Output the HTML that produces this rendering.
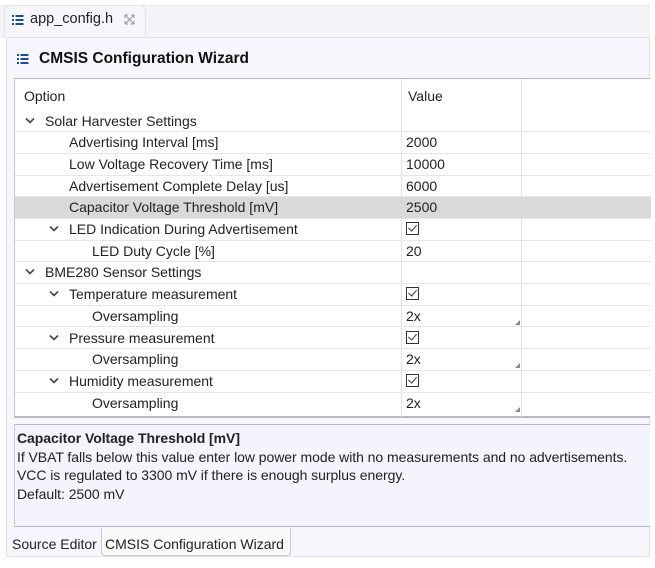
<!DOCTYPE html>
<html><head><style>
*{margin:0;padding:0;box-sizing:border-box}
body{width:655px;height:568px;background:#fff;font-family:"Liberation Sans",sans-serif;font-size:14px;color:#222;position:relative;overflow:hidden}
.abs{position:absolute}
.tabbar{left:0;top:5px;width:650px;height:33px;background:#f3f3f8;border-top:1px solid #e4e4ea}
.tab{left:4px;top:5px;width:142px;height:33px;background:#f6f6fa;border-radius:6px 6px 0 0;border:1px solid #e2e2ea;border-bottom:none}
.editor{left:6px;top:37px;width:644px;height:520px;background:#f6f6fc;border:1px solid #e0e0e8}
.table{left:14px;top:78px;width:636px;height:340px;background:#fff;border-top:1px solid #b8b8c0;border-left:1px solid #c8c8d0;border-bottom:2px solid #b8b8c0}
.row{position:absolute;left:0;width:636px;height:21.7px;border-bottom:1px solid #e6e6e6}
.row span{position:absolute;top:2px;white-space:nowrap}
.sel{background:#d9d9d9}
.vl{position:absolute;top:0;width:1px;height:338px;background:#e2e2e2}
.chev{position:absolute;top:6px}
.cb{position:absolute;left:391px;top:3px;width:13px;height:13px;border:1.5px solid #333}
.cb:after{content:"";position:absolute;left:3px;top:0px;width:4px;height:7px;border-right:1.3px solid #333;border-bottom:1.3px solid #333;transform:rotate(40deg)}
.grip{position:absolute;left:500px;top:14px;width:0;height:0;border-left:5px solid transparent;border-bottom:5px solid #888}
.desc{left:14px;top:424px;width:636px;height:103px;background:#f3f4fc;border-top:1px solid #b8b8c0;border-bottom:1px solid #b8b8c0;border-left:1px solid #c8c8d0;padding:4px 2px;line-height:18.5px;font-size:14px;letter-spacing:-0.05px;white-space:nowrap}
</style></head><body>
<div class="abs tabbar"></div>
<div class="abs tab"></div>
<svg class="abs" style="left:12px;top:15px" width="12" height="10"><g fill="#1a4d99"><rect x="0" y="0" width="2" height="2"/><rect x="0" y="4" width="2" height="2"/><rect x="0" y="8" width="2" height="2"/><rect x="3.5" y="0" width="8" height="2"/><rect x="3.5" y="4" width="8" height="2"/><rect x="3.5" y="8" width="8" height="2"/></g></svg>
<div class="abs" style="left:30px;top:11px;font-size:14.5px">app_config.h</div>
<svg class="abs" style="left:124px;top:14px" width="11" height="11"><path d="M1 1L10 10M10 1L1 10M1 1h3M1 1v3M10 1h-3M10 1v3M1 10h3M1 10v-3M10 10h-3M10 10v-3" stroke="#999" stroke-width="1" fill="none"/></svg>
<div class="abs editor"></div>
<svg class="abs" style="left:17px;top:54px" width="12" height="10"><g fill="#1a4d99"><rect x="0" y="0" width="2" height="2"/><rect x="0" y="4" width="2" height="2"/><rect x="0" y="8" width="2" height="2"/><rect x="3.5" y="0" width="8" height="2"/><rect x="3.5" y="4" width="8" height="2"/><rect x="3.5" y="8" width="8" height="2"/></g></svg>
<div class="abs" style="left:39px;top:50px;font-weight:bold;font-size:15.5px;color:#111">CMSIS Configuration Wizard</div>
<div class="abs table">
<div class="vl" style="left:386px"></div>
<div class="vl" style="left:506px"></div>
<span class="abs" style="left:9px;top:9px">Option</span>
<span class="abs" style="left:393px;top:9px">Value</span>
<div class="row" style="top:31.5px"><svg class="chev" style="left:10px" width="10" height="7"><path d="M1 1.5L5 5.5L9 1.5" stroke="#444" stroke-width="1.6" fill="none"/></svg><span style="left:30px">Solar Harvester Settings</span></div>
<div class="row" style="top:53.2px"><span style="left:54px">Advertising Interval [ms]</span><span style="left:391px">2000</span></div>
<div class="row" style="top:74.9px"><span style="left:54px">Low Voltage Recovery Time [ms]</span><span style="left:391px">10000</span></div>
<div class="row" style="top:96.6px"><span style="left:54px">Advertisement Complete Delay [us]</span><span style="left:391px">6000</span></div>
<div class="row sel" style="top:118.3px"><span style="left:54px">Capacitor Voltage Threshold [mV]</span><span style="left:391px">2500</span></div>
<div class="row" style="top:140px"><svg class="chev" style="left:34px" width="10" height="7"><path d="M1 1.5L5 5.5L9 1.5" stroke="#444" stroke-width="1.6" fill="none"/></svg><span style="left:54px">LED Indication During Advertisement</span><i class="cb"></i></div>
<div class="row" style="top:161.7px"><span style="left:77px">LED Duty Cycle [%]</span><span style="left:391px">20</span></div>
<div class="row" style="top:183.4px"><svg class="chev" style="left:10px" width="10" height="7"><path d="M1 1.5L5 5.5L9 1.5" stroke="#444" stroke-width="1.6" fill="none"/></svg><span style="left:30px">BME280 Sensor Settings</span></div>
<div class="row" style="top:205.1px"><svg class="chev" style="left:34px" width="10" height="7"><path d="M1 1.5L5 5.5L9 1.5" stroke="#444" stroke-width="1.6" fill="none"/></svg><span style="left:54px">Temperature measurement</span><i class="cb"></i></div>
<div class="row" style="top:226.8px"><span style="left:77px">Oversampling</span><span style="left:391px">2x</span><i class="grip"></i></div>
<div class="row" style="top:248.5px"><svg class="chev" style="left:34px" width="10" height="7"><path d="M1 1.5L5 5.5L9 1.5" stroke="#444" stroke-width="1.6" fill="none"/></svg><span style="left:54px">Pressure measurement</span><i class="cb"></i></div>
<div class="row" style="top:270.2px"><span style="left:77px">Oversampling</span><span style="left:391px">2x</span><i class="grip"></i></div>
<div class="row" style="top:291.9px"><svg class="chev" style="left:34px" width="10" height="7"><path d="M1 1.5L5 5.5L9 1.5" stroke="#444" stroke-width="1.6" fill="none"/></svg><span style="left:54px">Humidity measurement</span><i class="cb"></i></div>
<div class="row" style="top:313.6px;border-bottom:none"><span style="left:77px">Oversampling</span><span style="left:391px">2x</span><i class="grip"></i></div>
</div>
<div class="abs desc"><b>Capacitor Voltage Threshold [mV]</b><br>If VBAT falls below this value enter low power mode with no measurements and no advertisements.<br>VCC is regulated to 3300 mV if there is enough surplus energy.<br>Default: 2500 mV</div>
<div class="abs" style="left:12px;top:536px;font-size:14px">Source Editor</div>
<div class="abs" style="left:101px;top:528px;width:190px;height:28px;background:#fafafa;border:1px solid #c8c8d0;border-top:none;border-radius:0 0 4px 4px"></div>
<div class="abs" style="left:105px;top:536px;font-size:14px">CMSIS Configuration Wizard</div>
</body></html>
